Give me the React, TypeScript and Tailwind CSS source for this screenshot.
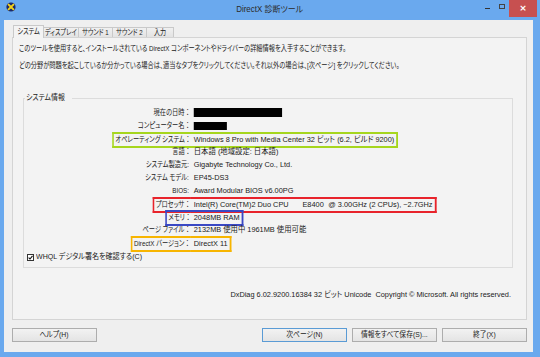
import type { ReactNode } from 'react';

type Row = { label: string; colon: 'full' | 'half'; value: ReactNode; box?: string };

const rows: Row[] = [
  { label: '現在の日時', colon: 'full', value: <span className="block h-[9px] w-[96px] bg-black" /> },
  { label: 'コンピューター名', colon: 'full', value: <span className="block h-[8px] w-[36px] bg-black" /> },
  {
    label: 'オペレーティング システム',
    colon: 'full',
    value: 'Windows 8 Pro with Media Center 32 ビット (6.2, ビルド 9200)',
    box: 'border-[#a6d61e]',
  },
  { label: '言語', colon: 'full', value: '日本語 (地域設定: 日本語)' },
  { label: 'システム製造元', colon: 'half', value: 'Gigabyte Technology Co., Ltd.' },
  { label: 'システム モデル', colon: 'half', value: 'EP45-DS3' },
  { label: 'BIOS', colon: 'half', value: 'Award Modular BIOS v6.00PG' },
  {
    label: 'プロセッサ',
    colon: 'full',
    value: (
      <>
        Intel(R) Core(TM)2 Duo CPU<span className="ml-[15px]">E8400</span>
        <span className="ml-[5px]">@ 3.00GHz (2 CPUs), ~2.7GHz</span>
      </>
    ),
    box: 'border-[#e8232b]',
  },
  { label: 'メモリ', colon: 'full', value: '2048MB RAM', box: 'border-[#3a48c4]' },
  { label: 'ページ ファイル', colon: 'full', value: '2132MB 使用中 1961MB 使用可能' },
  { label: 'DirectX バージョン', colon: 'full', value: 'DirectX 11', box: 'border-[#f7b500]' },
];

const tabs = ['ディスプレイ', 'サウンド 1', 'サウンド 2', '入力'];
const tabWidths = ['w-[35px]', 'w-[34px]', 'w-[34px]', 'w-[27px]'];

function Button({ children, primary }: { children: ReactNode; primary?: boolean }) {
  return (
    <button
      className={
        'flex h-[14px] w-[85px] items-center justify-center border bg-linear-to-b from-[#f2f2f2] to-[#e4e4e4] text-[#222] ' +
        (primary ? 'border-[#5a9bd5]' : 'border-[#adadad]')
      }
    >
      <span className="inline-block scale-x-[0.85] whitespace-nowrap text-[8px] leading-none">{children}</span>
    </button>
  );
}

function InfoRow({ row }: { row: Row }) {
  const box = row.box;
  return (
    <div className="grid h-[13px] grid-cols-[167px_1fr]">
      <div className="flex justify-end">
        <span
          className={
            'flex origin-right scale-x-[0.78] items-center whitespace-nowrap ' +
            (box ? 'border-y-2 border-l-2 pl-[2px] ' + box : '')
          }
        >
          {row.label}
          {row.colon === 'full' ? (
            <span className="[font-feature-settings:normal]">：</span>
          ) : (
            <span className="mr-[3px]">:</span>
          )}
        </span>
      </div>
      <div className="flex">
        <span
          className={
            'flex origin-left scale-x-[0.92] items-center whitespace-nowrap pl-[3px] ' +
            (box ? 'border-y-2 border-r-2 pr-[2px] ' + box : '')
          }
        >
          {row.value}
        </span>
      </div>
    </div>
  );
}

export default function App() {
  return (
    <div className="flex h-[357px] w-[540px] flex-col overflow-hidden bg-[#6aa9ee] text-[8px] text-[#1a1a1a] [font-family:'Liberation_Sans','Noto_Sans_CJK_JP',sans-serif] [font-feature-settings:'palt']">
      {/* title bar */}
      <div className="grid h-[20px] shrink-0 grid-cols-[1fr_auto_1fr]">
        <div className="flex items-start pl-[6px] pt-[2px]">
          <svg width="10" height="10" viewBox="0 0 10 10">
            <circle cx="5" cy="5" r="4.6" fill="#1b2a6b" />
            <path d="M2.6 2.6 L7.4 7.4 M7.4 2.6 L2.6 7.4" stroke="#f2d21b" strokeWidth="2" strokeLinecap="round" />
          </svg>
        </div>
        <div className="flex items-center pb-[1px] text-[8.5px] text-[#2a2a2a]">
          <span className="inline-block scale-x-[0.94]">DirectX 診断ツール</span>
        </div>
        <div className="flex items-start justify-end pr-[3px]">
          <div className="mr-[9px] mt-[8px] h-[1px] w-[5px] bg-[#333]" />
          <div className="mr-[4px] mt-[4px] h-[5px] w-[6px] border border-[#444]" />
          <div className="flex h-[17px] w-[28px] items-center justify-center bg-[#c75050] text-[9px] font-bold leading-none text-white [font-family:'DejaVu_Sans',sans-serif]">
            ×
          </div>
        </div>
      </div>

      {/* client area */}
      <div className="mb-[5px] ml-[4px] mr-[7px] flex flex-1 flex-col bg-[#efefef] pl-[8px] pr-[6px] pt-[5px]">
        {/* tabs */}
        <div className="relative z-10 ml-[1px] flex h-[12px] items-end">
          <div className="-mb-px flex h-[13px] w-[31px] items-center justify-center border-x border-t border-[#c9c9c9] bg-[#f3f3f3] pb-[1px]">
            <span className="inline-block scale-x-[0.78] whitespace-nowrap">システム</span>
          </div>
          {tabs.map((t, i) => (
            <div
              key={t}
              className={
                'flex h-[10px] items-center justify-center border-r border-t border-[#c9c9c9] bg-linear-to-b from-[#f0f0f0] to-[#e3e3e3] ' +
                tabWidths[i]
              }
            >
              <span className="inline-block scale-x-[0.76] whitespace-nowrap">{t}</span>
            </div>
          ))}
        </div>

        {/* tab page */}
        <div className="flex h-[283px] flex-col border border-[#d4d4d4] bg-[#f3f3f3] pl-[6px] pr-[9px] pt-[5px]">
          <p className="h-[12px] whitespace-nowrap leading-[12px]">
            <span className="inline-block origin-left scale-x-[0.775]">
              このツールを使用すると、インストールされている DirectX コンポーネントやドライバーの詳細情報を入手することができます。
            </span>
          </p>
          <p className="mt-[5px] h-[12px] whitespace-nowrap leading-[12px]">
            <span className="inline-block origin-left scale-x-[0.777]">
              どの分野が問題を起こしているか分かっている場合は、適当なタブをクリックしてください。それ以外の場合は、[次ページ] をクリックしてください。
            </span>
          </p>

          <fieldset className="mx-[4px] mt-[21px] border border-[#dcdcdc] pb-[4px] pt-[3px]">
            <legend className="ml-[1px] px-[1px] leading-[10px]">
              <span className="inline-block origin-left scale-x-[0.86]">システム情報</span>
            </legend>
            {rows.map((r) => (
              <InfoRow key={r.label} row={r} />
            ))}
            <div className="ml-[3px] mt-[2px] flex h-[12px] items-center gap-[2px]">
              <span className="flex h-[7px] w-[7px] items-center justify-center border border-[#333] bg-white">
                <svg width="5" height="5" viewBox="0 0 5 5">
                  <path d="M0.6 2.6 L2 4 L4.5 0.8" fill="none" stroke="#111" strokeWidth="1.1" />
                </svg>
              </span>
              <span className="inline-block origin-left scale-x-[0.88] whitespace-nowrap">WHQL デジタル署名を確認する(C)</span>
            </div>
          </fieldset>

          <div className="mr-[6px] mt-[21px] flex h-[12px] items-center justify-end">
            <span className="inline-block origin-right scale-x-[0.92] whitespace-nowrap">
              DxDiag 6.02.9200.16384 32 ビット Unicode&nbsp; Copyright © Microsoft. All rights reserved.
            </span>
          </div>
        </div>

        {/* buttons */}
        <div className="mt-[8px] flex items-center">
          <Button>ヘルプ(H)</Button>
          <div className="ml-auto flex gap-[5px]">
            <Button primary>次ページ(N)</Button>
            <Button>情報をすべて保存(S)...</Button>
            <Button>終了(X)</Button>
          </div>
        </div>
      </div>
    </div>
  );
}
